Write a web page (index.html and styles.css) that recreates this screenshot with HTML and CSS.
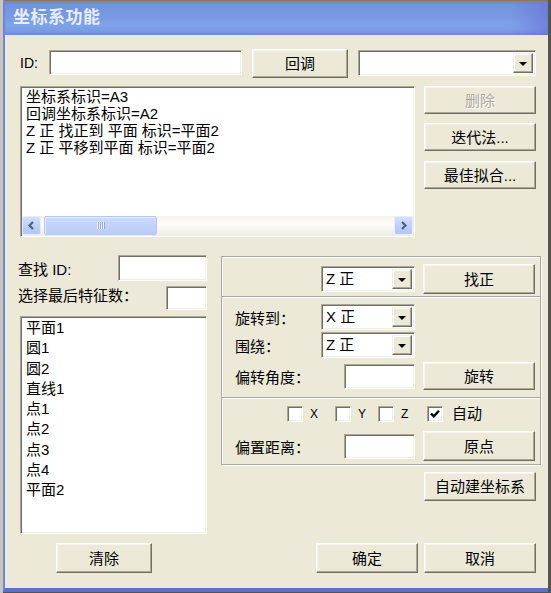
FILE: index.html
```html
<!DOCTYPE html>
<html lang="zh-CN">
<head>
<meta charset="utf-8">
<title>坐标系功能</title>
<link rel="stylesheet" href="styles.css">
</head>
<body>
<div class="window">
  <div class="titlebar"><span class="title">坐标系功能</span></div>
  <div class="client">
    <div class="row row-top">
      <span class="lbl lbl-id">ID:</span>
      <div class="edit edit-id"></div>
      <button class="btn btn-callback">回调</button>
      <div class="combo combo-top"><span class="combo-val"></span><span class="drop"><i class="arrow"></i></span></div>
    </div>

    <div class="row row-list">
      <div class="listbox listbox-log">
        <div class="log-lines">
          <div class="line">坐标系标识=A3</div>
          <div class="line">回调坐标系标识=A2</div>
          <div class="line">Z 正 找正到 平面 标识=平面2</div>
          <div class="line">Z 正 平移到平面 标识=平面2</div>
        </div>
        <div class="hscroll">
          <span class="sb-btn"><svg width="9" height="9" viewBox="0 0 9 9"><path d="M6 1 L2.5 4.5 L6 8" fill="none" stroke="#4d6185" stroke-width="2.2"/></svg></span>
          <span class="sb-track"><span class="sb-thumb"><span class="grip"></span></span></span>
          <span class="sb-btn"><svg width="9" height="9" viewBox="0 0 9 9"><path d="M3 1 L6.5 4.5 L3 8" fill="none" stroke="#4d6185" stroke-width="2.2"/></svg></span>
        </div>
      </div>
      <div class="side-btns">
        <button class="btn btn-side disabled">删除</button>
        <button class="btn btn-side">迭代法...</button>
        <button class="btn btn-side">最佳拟合...</button>
      </div>
    </div>

    <div class="row row-main">
      <div class="leftcol">
        <div class="field-row fr-find">
          <span class="lbl">查找 ID:</span>
          <div class="edit edit-find"></div>
        </div>
        <div class="field-row fr-sel">
          <span class="lbl">选择最后特征数：</span>
          <div class="edit edit-sel"></div>
        </div>
        <div class="listbox listbox-feat">
          <div class="item">平面1</div>
          <div class="item">圆1</div>
          <div class="item">圆2</div>
          <div class="item">直线1</div>
          <div class="item">点1</div>
          <div class="item">点2</div>
          <div class="item">点3</div>
          <div class="item">点4</div>
          <div class="item">平面2</div>
        </div>
      </div>

      <div class="rightcol">
        <div class="panel">
          <div class="sec sec1">
            <div class="combo combo-s"><span class="combo-val">Z 正</span><span class="drop"><i class="arrow"></i></span></div>
            <button class="btn btn-act">找正</button>
          </div>
          <div class="sec sec2">
            <div class="prow prow-combo">
              <span class="plbl w-combo">旋转到：</span>
              <div class="combo combo-s"><span class="combo-val">X 正</span><span class="drop"><i class="arrow"></i></span></div>
            </div>
            <div class="prow prow-combo prow-gap">
              <span class="plbl w-combo">围绕：</span>
              <div class="combo combo-s"><span class="combo-val">Z 正</span><span class="drop"><i class="arrow"></i></span></div>
            </div>
            <div class="prow prow-edit">
              <span class="plbl w-edit">偏转角度：</span>
              <div class="edit edit-small"></div>
              <button class="btn btn-act btn-rot">旋转</button>
            </div>
          </div>
          <div class="sec sec3">
            <div class="chk-row">
              <label class="chk chk-x"><span class="box"></span><span class="chk-lbl">X</span></label>
              <label class="chk chk-y"><span class="box"></span><span class="chk-lbl">Y</span></label>
              <label class="chk chk-z"><span class="box"></span><span class="chk-lbl">Z</span></label>
              <label class="chk chk-auto"><span class="box"><svg width="12" height="12" viewBox="0 0 12 12"><path d="M2 5.5 L4.8 8.3 L10 2.8" fill="none" stroke="#000" stroke-width="2.4"/></svg></span><span class="chk-lbl cjk">自动</span></label>
            </div>
            <div class="prow prow-edit prow-offset">
              <span class="plbl w-edit">偏置距离：</span>
              <div class="edit edit-small"></div>
              <button class="btn btn-act btn-origin">原点</button>
            </div>
          </div>
        </div>
        <button class="btn btn-auto">自动建坐标系</button>
      </div>
    </div>

    <div class="row row-bottom">
      <button class="btn btn-clear">清除</button>
      <button class="btn btn-ok">确定</button>
      <button class="btn btn-cancel">取消</button>
    </div>
  </div>
</div>
</body>
</html>
```

FILE: styles.css
```css
* { box-sizing: border-box; margin: 0; padding: 0; }

html, body { width: 551px; height: 593px; overflow: hidden; }

body {
  background: linear-gradient(to right, #c9c6ba 0 3px, #55534b 3px);
  font-family: "Liberation Sans", "Noto Sans CJK SC", sans-serif;
  font-size: 15px;
  color: #000;
}

.window {
  margin-left: 3px;
  width: 545px;
  height: 592px;
  display: flex;
  flex-direction: column;
  background: #ece9d8;
  border-left: 2px solid #6f84db;
  border-bottom: 4px solid #5a6fce;
}

.titlebar {
  height: 35px;
  flex: none;
  border-top: 1px solid #8c7a4c;
  padding-left: 8px;
  background:
    linear-gradient(to right, rgba(104, 110, 214, 0) 93%, rgba(104, 110, 214, 0.6) 100%),
    linear-gradient(to bottom, #6d88d8 0, #7694df 5px, #7898e1 14px, #7ea2e9 24px, #7b9ce4 30px, #6c87d8 34px);
}

.title {
  display: block;
  line-height: 34px;
  font-size: 17px;
  font-weight: 700;
  color: #e6eeff;
  letter-spacing: 0.5px;
}

.client {
  flex: 1;
  padding: 14px 0 0 15px;
}

.row { display: flex; align-items: flex-start; }

/* ---------- classic controls ---------- */
.btn {
  font-family: inherit;
  font-size: 15px;
  color: #000;
  background: #ece9d8;
  border: 1px solid;
  border-color: #fff #716f64 #716f64 #fff;
  box-shadow: inset -1px -1px #aca899, inset 1px 1px #f6f5ee;
  display: flex;
  align-items: center;
  justify-content: center;
  line-height: 1;
}

.btn.disabled {
  color: #aca899;
  text-shadow: 1px 1px #fff;
}

.edit {
  background: #fff;
  border: 1px solid;
  border-color: #aca899 #fff #fff #aca899;
  box-shadow: inset 1px 1px #716f64, inset -1px -1px #f1efe2;
}

.combo {
  display: flex;
  align-items: center;
  background: #fff;
  border: 1px solid;
  border-color: #aca899 #fff #fff #aca899;
  box-shadow: inset 1px 1px #716f64, inset -1px -1px #f1efe2;
  padding: 2px 2px 2px 3px;
}

.combo-val {
  flex: 1;
  font-size: 15px;
  line-height: 20px;
  padding-left: 1px;
}

.drop {
  width: 20px;
  align-self: stretch;
  background: #ece9d8;
  border: 1px solid;
  border-color: #f1efe2 #716f64 #716f64 #f1efe2;
  box-shadow: inset -1px -1px #aca899, inset 1px 1px #fff;
  display: flex;
  align-items: center;
  justify-content: center;
}

.arrow {
  display: block;
  width: 0;
  height: 0;
  border-left: 4px solid transparent;
  border-right: 4px solid transparent;
  border-top: 4px solid #000;
  margin-top: 1px;
}

.listbox {
  background: #fff;
  border: 1px solid;
  border-color: #aca899 #fff #fff #aca899;
  box-shadow: inset 1px 1px #716f64, inset -1px -1px #f1efe2;
  padding: 2px;
}

.lbl { font-size: 15px; white-space: nowrap; }

/* ---------- row 1 ---------- */
.row-top { height: 29px; }
.lbl-id { width: 29px; line-height: 29px; font-size: 14px; }
.edit-id { width: 193px; height: 25px; margin-top: 1px; }
.btn-callback { width: 96px; height: 29px; margin-left: 10px; }
.combo-top { width: 178px; height: 26px; margin-left: 10px; margin-top: 1px; }

/* ---------- row 2 ---------- */
.row-list { margin-top: 8px; }

.listbox-log {
  width: 395px;
  height: 151px;
  display: flex;
  flex-direction: column;
  padding: 0;
}

.log-lines {
  flex: 1;
  padding: 1px 0 0 5px;
}

.line {
  font-size: 15px;
  line-height: 17px;
  white-space: nowrap;
}

.hscroll {
  height: 19px;
  margin: 0 1px 1px 1px;
  display: flex;
  background: linear-gradient(to bottom, #f5f4ee, #fdfdfa 45%, #eeece4);
}

.sb-btn {
  width: 19px;
  height: 19px;
  flex: none;
  border: 1px solid #e6ecfb;
  border-radius: 2px;
  background: linear-gradient(to bottom, #d4e0fd, #bccdf8 60%, #b3c6f5);
  display: flex;
  align-items: center;
  justify-content: center;
}

.sb-track {
  flex: 1;
  display: flex;
  padding: 0 1px;
}

.sb-thumb {
  width: 113px;
  height: 19px;
  margin-left: 2px;
  border: 1px solid #b4c8f6;
  border-radius: 2px;
  background: linear-gradient(to bottom, #cddbfd, #c2d3fb 50%, #b8cbf8);
  box-shadow: inset 1px 1px #e5edfe;
  display: flex;
  align-items: center;
  justify-content: center;
}

.grip {
  width: 8px;
  height: 7px;
  background: repeating-linear-gradient(to right, #eef3fe 0 1px, #8ea9ec 1px 2px);
}

.side-btns {
  margin-left: 9px;
  display: flex;
  flex-direction: column;
}

.btn-side { width: 112px; height: 28px; }
.btn-side + .btn-side { margin-top: 9px; }
.btn-side:last-child { margin-top: 10px; }

/* ---------- row 3 ---------- */
.row-main { margin-top: 18px; }

.leftcol { width: 187px; display: flex; flex-direction: column; }

.field-row { display: flex; align-items: center; justify-content: space-between; }
.field-row .lbl { margin-left: -2px; }
.edit-find { width: 89px; height: 26px; }
.fr-sel { margin-top: 5px; align-items: flex-start; }
.fr-sel .lbl { line-height: 20px; }
.edit-sel { width: 41px; height: 24px; }

.listbox-feat {
  width: 187px;
  height: 218px;
  margin-top: 6px;
  padding: 1px 0 0 5px;
}

.item { font-size: 15px; line-height: 20.3px; white-space: nowrap; }

.rightcol {
  margin-left: 14px;
  width: 320px;
  display: flex;
  flex-direction: column;
  align-items: flex-end;
}

.panel {
  width: 320px;
  height: 209px;
  margin-top: 1px;
  border: 1px solid #aca899;
  box-shadow: inset 1px 1px #fff, 1px 1px #fff;
  display: flex;
  flex-direction: column;
}

.sec { padding-right: 5px; }
.sec + .sec {
  border-top: 1px solid #aca899;
  box-shadow: inset 0 1px #fff;
}

.sec1 {
  height: 39px;
  padding-top: 7px;
  display: flex;
  justify-content: flex-end;
  align-items: flex-start;
}

.combo-s { width: 94px; height: 26px; }
.sec1 .combo-s { margin-top: 2px; margin-right: 8px; }

.btn-act { width: 112px; height: 30px; }

.sec2 { height: 101px; padding-top: 7px; padding-left: 13px; }

.prow { display: flex; align-items: center; }
.prow-gap { margin-top: 2px; }
.plbl { font-size: 15px; white-space: nowrap; }
.w-combo { width: 86px; }
.w-edit { width: 109px; }
.prow-edit { margin-top: 4px; }
.edit-small { width: 71px; height: 25px; margin-right: 8px; }
.btn-rot { height: 28px; }

.sec3 { flex: 1; padding-top: 8px; padding-left: 13px; }

.chk-row { display: flex; height: 16px; padding-left: 52px; }
.chk { display: flex; align-items: center; }
.chk-x { width: 48px; }
.chk-y { width: 43px; }
.chk-z { width: 49px; }

.box {
  width: 16px;
  height: 16px;
  flex: none;
  background: #fff;
  border: 1px solid;
  border-color: #aca899 #fff #fff #aca899;
  box-shadow: inset 1px 1px #716f64, inset -1px -1px #f1efe2;
  display: flex;
  align-items: center;
  justify-content: center;
}

.chk-lbl { margin-left: 7px; font-size: 12px; line-height: 16px; }
.chk-lbl.cjk { margin-left: 9px; font-size: 15px; }

.prow-offset { margin-top: 9px; }
.prow-offset .edit-small { margin-top: 1px; }

.btn-auto { width: 112px; height: 29px; margin-top: 7px; margin-right: 5px; }

/* ---------- row 4 ---------- */
.row-bottom { margin-top: 9px; }
.btn-clear { width: 96px; height: 30px; margin-left: 36px; }
.btn-ok { width: 102px; height: 30px; margin-left: 164px; }
.btn-cancel { width: 112px; height: 30px; margin-left: 6px; }
```
